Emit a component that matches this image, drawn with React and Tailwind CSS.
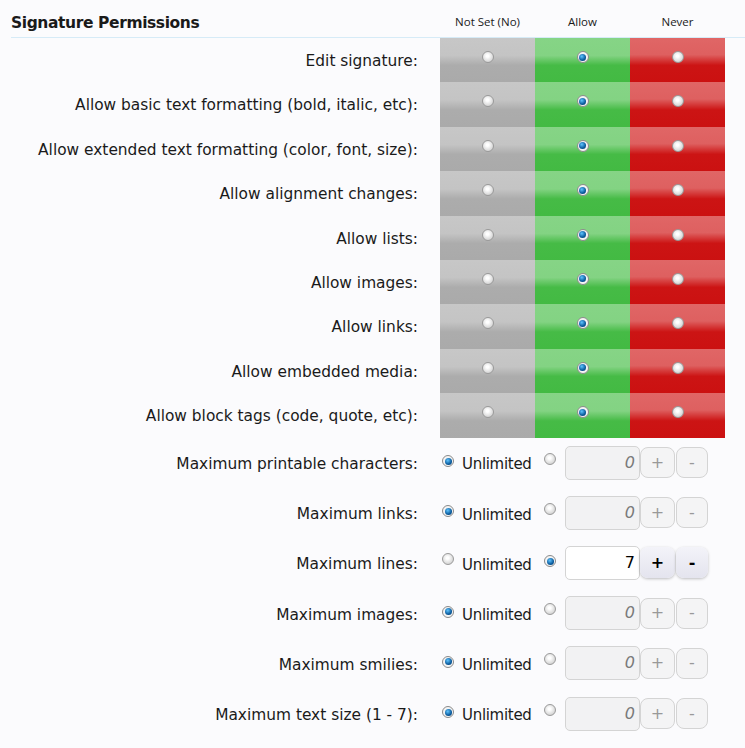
const permissions = [
  'Edit signature:',
  'Allow basic text formatting (bold, italic, etc):',
  'Allow extended text formatting (color, font, size):',
  'Allow alignment changes:',
  'Allow lists:',
  'Allow images:',
  'Allow links:',
  'Allow embedded media:',
  'Allow block tags (code, quote, etc):',
];

const limits = [
  { label: 'Maximum printable characters:', unlimited: true, value: 0 },
  { label: 'Maximum links:', unlimited: true, value: 0 },
  { label: 'Maximum lines:', unlimited: false, value: 7 },
  { label: 'Maximum images:', unlimited: true, value: 0 },
  { label: 'Maximum smilies:', unlimited: true, value: 0 },
  { label: 'Maximum text size (1 - 7):', unlimited: true, value: 0 },
];

const Radio = ({ checked }) =>
  checked ? (
    <span className="inline-flex w-[12px] h-[12px] rounded-full border border-[#8a8a8a] bg-[#f4f4f4] items-center justify-center shrink-0">
      <span className="w-[7px] h-[7px] rounded-full bg-[radial-gradient(circle_at_40%_35%,#5ec4ff,#0a5a9c_60%,#063b66)]" />
    </span>
  ) : (
    <span className="inline-block w-[12px] h-[12px] rounded-full border border-[#9a9a9a] bg-[radial-gradient(circle_at_45%_40%,#ffffff_15%,#dedede_60%,#c2c2c2)] shrink-0" />
  );

const App = () => {
  return (
    <div className="w-[745px] h-[748px] overflow-hidden bg-[#fbfbfd] text-[#1a1a1a] font-['DejaVu_Sans','Open_Sans',sans-serif]">
      {/* Header */}
      <div className="ml-[11px] h-[38px] flex items-end border-b border-[#d6ebf7]">
        <h2 className="w-[429px] pb-[6px] text-[15.5px] font-bold leading-none tracking-[-0.4px]">Signature Permissions</h2>
        <div className="flex text-[11.5px] pb-[10px] leading-none font-['Open_Sans',sans-serif]">
          <div className="w-[95px] text-center">Not Set (No)</div>
          <div className="w-[95px] text-center">Allow</div>
          <div className="w-[95px] text-center">Never</div>
        </div>
      </div>

      {/* Yes/No permission rows */}
      <div>
        {permissions.map((label, i) => (
          <div key={i} className="flex h-[44.4px]">
            <div className="w-[418px] text-right text-[15.4px] pt-[12px]">{label}</div>
            <div className="w-[22px]" />
            <div className="w-[95px] flex justify-center pt-[13px] bg-[linear-gradient(to_bottom,#c7c7c7_0%,#c4c4c4_40%,#acacac_62%,#aaaaaa_100%)]">
              <Radio checked={false} />
            </div>
            <div className="w-[95px] flex justify-center pt-[13px] bg-[linear-gradient(to_bottom,#86d486_0%,#83d383_40%,#46bb46_62%,#43ba43_100%)]">
              <Radio checked />
            </div>
            <div className="w-[95px] flex justify-center pt-[13px] bg-[linear-gradient(to_bottom,#e06666_0%,#de6060_38%,#cc1414_62%,#cb1111_100%)]">
              <Radio checked={false} />
            </div>
          </div>
        ))}
      </div>

      {/* Limit rows */}
      <div>
        {limits.map((row, i) => (
          <div key={i} className="flex items-center h-[50.2px]">
            <div className="w-[418px] text-right text-[15.4px] pt-[4px]">{row.label}</div>
            <div className="w-[24px]" />
            <div className="flex items-center">
              <div className="self-start pt-[2px]">
                <Radio checked={row.unlimited} />
              </div>
              <span className="ml-[8px] text-[15px] w-[82px] pt-[4px] tracking-[-0.3px]">Unlimited</span>
              <div className="self-start pt-[2px]">
                <Radio checked={!row.unlimited} />
              </div>
              <div
                className={`ml-[9px] w-[75px] h-[34px] rounded-[5px] border border-[#d4d4d4] flex items-center justify-end pr-[4px] text-[16px] ${
                  row.unlimited ? 'bg-[#f2f2f3] text-[#7a7a7a] italic' : 'bg-white text-black'
                }`}
              >
                {row.value}
              </div>
              {row.unlimited ? (
                <>
                  <div className="w-[35px] h-[31px] rounded-[8px] border border-[#d4d4d4] bg-[#f4f4f5] flex items-center justify-center text-[16px] text-[#999]">+</div>
                  <div className="ml-[1px] w-[32px] h-[31px] rounded-[8px] border border-[#d4d4d4] bg-[#f4f4f5] flex items-center justify-center text-[16px] text-[#999]">-</div>
                </>
              ) : (
                <>
                  <div className="w-[35px] h-[31px] rounded-[8px] bg-[linear-gradient(to_bottom,#f3f3f9,#e4e4ee)] shadow-[0_1px_3px_rgba(0,0,0,0.25)] flex items-center justify-center text-[16px] font-bold text-black">+</div>
                  <div className="ml-[1px] w-[32px] h-[31px] rounded-[8px] bg-[linear-gradient(to_bottom,#f3f3f9,#e4e4ee)] shadow-[0_1px_3px_rgba(0,0,0,0.25)] flex items-center justify-center text-[16px] font-bold text-black">-</div>
                </>
              )}
            </div>
          </div>
        ))}
      </div>
    </div>
  );
};

export default App;
